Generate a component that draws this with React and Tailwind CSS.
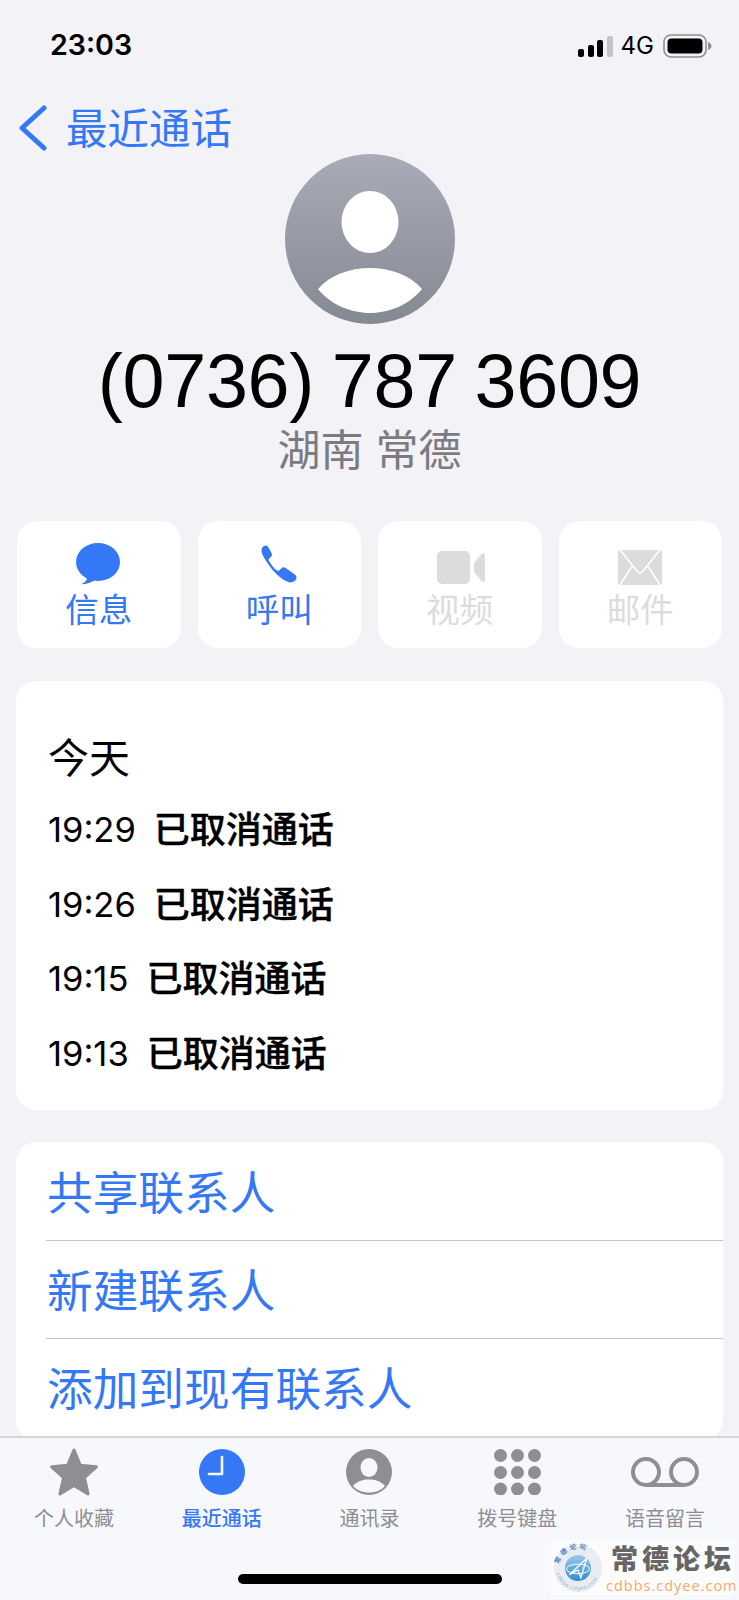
import React from "react";

const FONT = "font-['Inter','Noto_Sans_CJK_SC',sans-serif]";

const calls = ["19:29", "19:26", "19:15", "19:13"];

const MessageIcon = () => (
  <svg width="46" height="42" viewBox="0 0 46 42" fill="#3478f6">
    <ellipse cx="23" cy="19" rx="22" ry="19" />
    <path d="M10 30 L12 36 Q10 40 6 41 Q13 42 22 36 Z" />
  </svg>
);

const PhoneIcon = () => (
  <svg width="38" height="38" viewBox="0 0 38 38" fill="#3478f6">
    <path d="M3.5 1.2 C5.5 -0.2 7.5 0.5 8.5 2.5 L11.5 8 C12.3 9.5 12 11 10.8 12 L9.2 13.5 C8.5 14.2 8.5 15 8.9 15.7 C11 19.5 14 23.5 17 25.5 C17.8 26 18.6 26 19.2 25.4 L21.5 23.2 C22.5 22 24 22 25.3 22.8 L34.8 29.5 C37 31 37 33.8 35.2 35.4 C33 37.5 29.8 38 27 36.6 C20.5 33.4 13.5 27 8.5 19.5 C4.5 13.5 1.2 8.5 1.5 5 C1.6 3.4 2.4 2 3.5 1.2 Z" />
  </svg>
);

const VideoIcon = () => (
  <svg width="48" height="34" viewBox="0 0 48 34" fill="#dcdcdc">
    <rect x="0" y="0" width="33" height="33" rx="5" />
    <path d="M37 12 L44.5 3 Q48 1 48 5 L48 28 Q48 32 44.5 30 L37 21 Z" />
  </svg>
);

const MailIcon = () => (
  <svg width="44" height="35" viewBox="0 0 44 35">
    <rect x="0" y="0" width="44" height="35" rx="2" fill="#dcdcdc" />
    <path d="M2 0 L19 21 Q22 24.5 25 21 L42 0 M14.5 15.5 L2 35 M29.5 15.5 L42 35" fill="none" stroke="#fff" strokeWidth="1.7" />
  </svg>
);

const StarIcon = () => (
  <svg width="52" height="50" viewBox="0 0 50 48" fill="#8e8e93" stroke="#8e8e93" strokeWidth="3" strokeLinejoin="round">
    <polygon points="25,3 31,17.5 46.5,19 35,29.5 38.5,45 25,37 11.5,45 15,29.5 3.5,19 19,17.5" />
  </svg>
);

const ClockIcon = () => (
  <svg width="46" height="46" viewBox="0 0 46 46">
    <circle cx="23" cy="23" r="23" fill="#3478f6" />
    <path d="M23 8 L23 25 L10 25" fill="none" stroke="#f7f8fb" strokeWidth="2.6" strokeLinecap="round" strokeLinejoin="round" />
  </svg>
);

const PersonIcon = () => (
  <svg width="46" height="46" viewBox="0 0 46 46">
    <circle cx="23" cy="23" r="23" fill="#8e8e93" />
    <ellipse cx="23" cy="18.5" rx="8.5" ry="9.5" fill="#f7f8fb" />
    <path d="M7 37 C11 32 17 30.5 23 30.5 C29 30.5 35 32 39 37 C35 41.5 29 43.5 23 43.5 C17 43.5 11 41.5 7 37 Z" fill="#f7f8fb" />
  </svg>
);

const KeypadIcon = () => (
  <svg width="47" height="46" viewBox="0 0 47 46" fill="#8e8e93">
    {[6.5, 23.5, 40].map((cy) =>
      [6.5, 23.5, 40.5].map((cx) => <circle key={`${cx}-${cy}`} cx={cx} cy={cy} r="6.5" />)
    )}
  </svg>
);

const VoicemailIcon = () => (
  <svg width="68" height="30" viewBox="0 0 68 30" fill="none" stroke="#8e8e93" strokeWidth="4">
    <circle cx="15" cy="15" r="13" />
    <circle cx="53" cy="15" r="13" />
    <path d="M15 28 L53 28" />
  </svg>
);

const actions = [
  { label: "信息", icon: <div className="-ml-[2px]"><MessageIcon /></div>, on: true },
  { label: "呼叫", icon: <div className="-mt-[2px] mb-[2px]"><PhoneIcon /></div>, on: true },
  { label: "视频", icon: <div className="ml-[3px]"><VideoIcon /></div>, on: false },
  { label: "邮件", icon: <MailIcon />, on: false },
];

const tabs = [
  { label: "个人收藏", icon: <StarIcon /> },
  { label: "最近通话", icon: <ClockIcon />, on: true },
  { label: "通讯录", icon: <PersonIcon /> },
  { label: "拨号键盘", icon: <KeypadIcon /> },
  { label: "语音留言", icon: <VoicemailIcon /> },
];

const links = ["共享联系人", "新建联系人", "添加到现有联系人"];

const Avatar = () => (
  <svg width="170" height="170" viewBox="0 0 170 170">
    <defs>
      <linearGradient id="avatarFill" x1="0" y1="0" x2="0" y2="1">
        <stop offset="0" stopColor="#a9acb8" />
        <stop offset="1" stopColor="#858992" />
      </linearGradient>
    </defs>
    <circle cx="85" cy="85" r="85" fill="url(#avatarFill)" />
    <ellipse cx="85" cy="68" rx="28.5" ry="31" fill="#fff" />
    <path d="M33 135 C45 121 65 114 85 114 C105 114 125 121 137 135 C125 150 105 159 85 159 C65 159 45 150 33 135 Z" fill="#fff" />
  </svg>
);

const StatusBar = () => (
  <div className="flex h-[90px] items-start justify-between pl-[50px] pr-[27px] pt-[28px]">
    <span className="text-[28.6px] leading-[34px] font-semibold text-black">23:03</span>
    <div className="mt-[6px] flex items-center">
      <div className="flex items-end gap-[3.5px]">
        <span className="h-[8px] w-[6px] rounded-[2px] bg-black" />
        <span className="h-[12px] w-[6px] rounded-[2px] bg-black" />
        <span className="h-[17px] w-[6px] rounded-[2px] bg-black" />
        <span className="h-[21px] w-[6px] rounded-[2px] bg-[#c4c4c8]" />
      </div>
      <span className="ml-[8px] text-[24px] leading-[24px] text-black">4G</span>
      <svg className="ml-[9px]" width="49" height="24" viewBox="0 0 49 24">
        <rect x="1" y="1" width="42" height="22" rx="7" fill="none" stroke="#8e8e93" strokeWidth="1.6" />
        <rect x="4.5" y="4.5" width="35" height="15" rx="4" fill="#000" />
        <path d="M45 8 Q48.5 9.5 48.5 12 Q48.5 14.5 45 16 Z" fill="#8e8e93" />
      </svg>
    </div>
  </div>
);

// forum stamp sitting over the bottom right corner
const Stamp = () => (
  <div className="absolute bottom-[5px] right-[5px] flex h-[55px] w-[183px] items-center bg-[#fcfcfc]">
    <svg className="ml-[2px] shrink-0" width="50" height="50" viewBox="0 0 52 52">
      <defs>
        <path id="stampTop" d="M6 26 A20 20 0 0 1 46 26" />
        <path id="stampBottom" d="M3 26 A23 23 0 0 0 49 26" />
        <linearGradient id="stampDisk" x1="0" y1="0" x2="0" y2="1">
          <stop offset="0" stopColor="#9ec9ea" />
          <stop offset="1" stopColor="#2f8ed2" />
        </linearGradient>
      </defs>
      <circle cx="26" cy="26" r="25" fill="#e9ecf0" />
      <circle cx="26" cy="26" r="13.5" fill="url(#stampDisk)" />
      <path d="M17 33 L35 16 L29 36 L26 28 Z" fill="none" stroke="#fff" strokeWidth="1.4" />
      <ellipse cx="26" cy="27" rx="12" ry="5" fill="none" stroke="#fff" strokeWidth="1" />
      <text fontSize="7" fontWeight="700" fill="#4f7fc4" letterSpacing="2.5">
        <textPath href="#stampTop" startOffset="6%">常德论坛</textPath>
      </text>
      <text fontSize="5.5" fill="#9db6cf" letterSpacing="0.6">
        <textPath href="#stampBottom" startOffset="8%">cdbbs.cdyee.com</textPath>
      </text>
    </svg>
    <div className="ml-[3px] flex flex-col">
      <span className="pl-[5px] text-[27px] leading-[36px] font-black tracking-[4px] text-[#666666]">常德论坛</span>
      <span className="text-[14.5px] leading-[15px] tracking-[1px] text-[#f2ab6b] font-['Open_Sans',sans-serif]">cdbbs.cdyee.com</span>
    </div>
  </div>
);

const App = () => {
  return (
    <div className={`relative flex h-[1600px] w-[739px] flex-col overflow-hidden bg-[#f2f2f7] ${FONT}`}>
      <div className="min-h-0 flex-1 overflow-hidden">
        <StatusBar />

        {/* back link */}
        <div className="flex h-[64px] items-start pl-[19px] pt-[15px]">
          <svg width="28" height="46" viewBox="0 0 28 46" fill="none" stroke="#3478f6" strokeWidth="5" strokeLinecap="round" strokeLinejoin="round">
            <path d="M25 3 L3 23 L25 43" />
          </svg>
          <span className="ml-[19px] text-[41.5px] leading-[48px] text-[#3478f6]">最近通话</span>
        </div>

        <div className="flex justify-center">
          <Avatar />
        </div>

        <h1 className="mt-[17px] text-center text-[75.5px] leading-[80px] font-normal tracking-[-0.3px] [word-spacing:-3px] text-black font-['Liberation_Sans',sans-serif]">(0736) 787 3609</h1>
        <p className="mt-[3px] text-center text-[43px] leading-[52px] text-[#7c7c80]">湖南 常德</p>

        <div className="mt-[45px] grid grid-cols-4 gap-[17px] pl-[17px] pr-[17px]">
          {actions.map((a) => (
            <div key={a.label} className="flex h-[127px] flex-col items-center rounded-[20px] bg-white">
              <div className="flex h-[68px] items-end justify-center pb-[4px]">{a.icon}</div>
              <span className={`mt-[1px] text-[33.5px] leading-[40px] ${a.on ? "text-[#3478f6]" : "text-[#dcdcdc]"}`}>{a.label}</span>
            </div>
          ))}
        </div>

        <section className="mx-[16px] mt-[33px] h-[429px] rounded-[20px] bg-white pl-[32px] pt-[52px]">
          <h2 className="text-[41px] leading-[50px] font-normal text-black">今天</h2>
          <ul className="mt-[10px]">
            {calls.map((time) => (
              <li key={time} className="flex h-[74.5px] items-center text-black">
                <span className="text-[34.5px] leading-[40px]">{time}</span>
                <span className="ml-[18px] text-[36px] leading-[40px] font-medium [-webkit-text-stroke:0.4px_black]">已取消通话</span>
              </li>
            ))}
          </ul>
        </section>

        <section className="ml-[16px] mr-[16px] mt-[32px] rounded-[20px] bg-white pb-[4px] pl-[30px]">
          {links.map((text, i) => (
            <div key={text} className={`flex h-[98px] items-center pt-[5px] ${i > 0 ? "border-t border-[#c6c6c8]" : ""}`}>
              <span className="ml-[1px] text-[45.7px] leading-[54px] text-[#3478f6]">{text}</span>
            </div>
          ))}
        </section>
      </div>

      {/* tab bar */}
      <nav className="grid h-[164px] shrink-0 grid-cols-5 items-start border-t-2 border-[#d6d6d9] bg-[#f7f8fb] pt-[8px]">
        {tabs.map((t) => (
          <div key={t.label} className="flex flex-col items-center">
            <div className="flex h-[52px] items-center justify-center">{t.icon}</div>
            <span className={`mt-[9px] text-[20px] leading-[24px] ${t.on ? "font-medium text-[#3478f6]" : "text-[#8e8e93]"}`}>{t.label}</span>
          </div>
        ))}
      </nav>

      {/* home indicator */}
      <div className="absolute bottom-[16px] left-[238px] h-[10px] w-[264px] rounded-full bg-black" />
      <Stamp />
    </div>
  );
};

export default App;
